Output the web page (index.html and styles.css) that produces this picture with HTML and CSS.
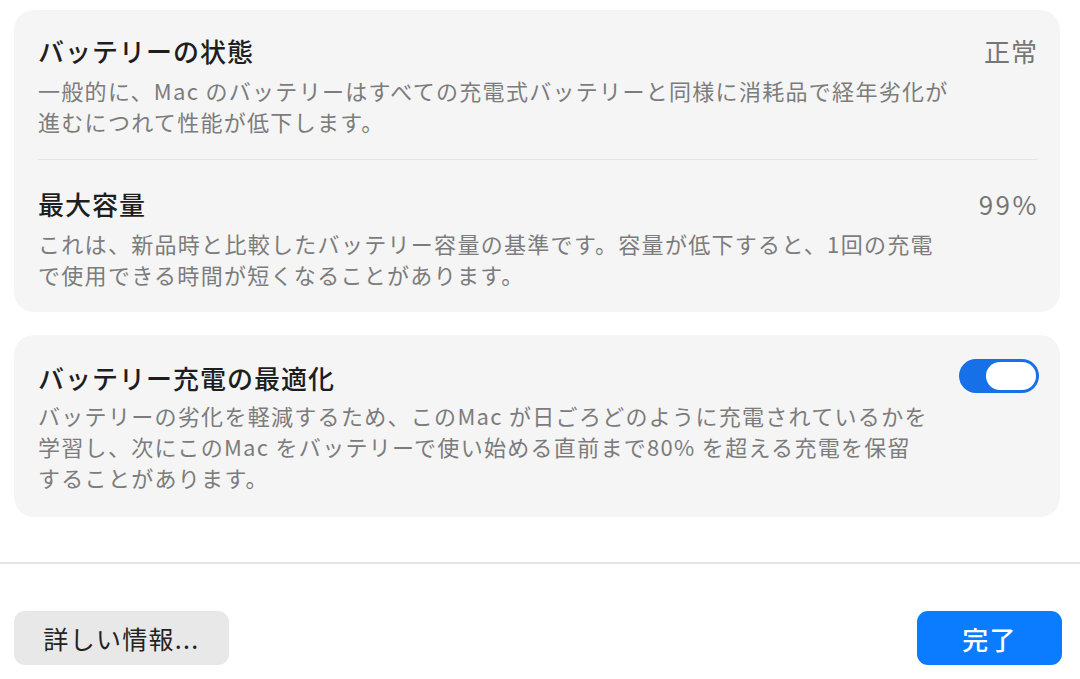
FILE: index.html
```html
<!DOCTYPE html>
<html lang="ja">
<head>
<meta charset="utf-8">
<link rel="stylesheet" href="styles.css">
</head>
<body>
<div class="content">
  <section class="card">
    <div class="row row-first">
      <div class="text">
        <div class="title">バッテリーの状態</div>
        <div class="desc">一般的に、Mac のバッテリーはすべての充電式バッテリーと同様に消耗品で経年劣化が<br>進むにつれて性能が低下します。</div>
      </div>
      <div class="value">正常</div>
    </div>
    <div class="row row-second">
      <div class="text">
        <div class="title">最大容量</div>
        <div class="desc">これは、新品時と比較したバッテリー容量の基準です。容量が低下すると、1回の充電<br>で使用できる時間が短くなることがあります。</div>
      </div>
      <div class="value value-num">99%</div>
    </div>
  </section>
  <section class="card card-opt">
    <div class="row row-opt">
      <div class="text">
        <div class="title">バッテリー充電の最適化</div>
        <div class="desc">バッテリーの劣化を軽減するため、このMac が日ごろどのように充電されているかを<br>学習し、次にこのMac をバッテリーで使い始める直前まで80% を超える充電を保留<br>することがあります。</div>
      </div>
      <div class="toggle"><div class="knob"></div></div>
    </div>
  </section>
</div>
<footer class="footer">
  <button class="btn btn-plain">詳しい情報...</button>
  <button class="btn btn-primary">完了</button>
</footer>
</body>
</html>
```
FILE: styles.css
```css
* { box-sizing: border-box; }
html, body {
  margin: 0;
  padding: 0;
  background: #ffffff;
  font-family: "Noto Sans CJK JP", "Noto Sans", sans-serif;
  width: 1080px;
  height: 679px;
  overflow: hidden;
}
.content {
  padding: 10px 20px 0 14px;
  display: flex;
  flex-direction: column;
  gap: 23px;
}
.card {
  background: #f5f5f5;
  border-radius: 20px;
  padding: 0 23px 0 24px;
}
.row {
  display: flex;
  justify-content: space-between;
  align-items: flex-start;
}
.row-first {
  padding: 25px 0 22px;
  border-bottom: 1px solid #e4e4e4;
}
.row-second {
  padding: 28px 0 22px;
}
.row-opt {
  padding: 27px 0 24px;
}
.text {
  width: 940px;
}
.title {
  font-size: 26px;
  line-height: 32px;
  font-weight: 500;
  color: #1e1e1e;
  letter-spacing: 1px;
}
.desc {
  margin-top: 8px;
  font-size: 22px;
  line-height: 31px;
  color: #7c7c7c;
  letter-spacing: 1.3px;
}
.row-opt .desc { margin-top: 6px; }
.value {
  font-size: 26px;
  line-height: 32px;
  color: #767676;
  white-space: nowrap;
  letter-spacing: 1px;
  margin-right: -1px;
}
.value-num {
  letter-spacing: 2.5px;
  margin-right: -2px;
}
.toggle {
  margin-top: -3px;
  margin-right: -2px;
  width: 82px;
  height: 34px;
  border-radius: 17px;
  background: #1670e8;
  padding: 3px;
  display: flex;
  justify-content: flex-end;
}
.knob {
  width: 50px;
  height: 28px;
  border-radius: 14px;
  background: #ffffff;
}
.footer {
  margin-top: 45px;
  border-top: 2px solid #e3e3e3;
  padding: 47px 18px 0 14px;
  display: flex;
  justify-content: space-between;
}
.btn {
  font-family: "Noto Sans CJK JP", "Noto Sans", sans-serif;
  border: none;
  height: 54px;
  border-radius: 11px;
  font-size: 25px;
  padding: 0;
  letter-spacing: 1.3px;
}
.btn-plain {
  width: 215px;
  background: #e8e8e8;
  color: #222222;
}
.btn-primary {
  width: 145px;
  background: #0b7bff;
  color: #ffffff;
  font-weight: 500;
  font-size: 26px;
}
```
